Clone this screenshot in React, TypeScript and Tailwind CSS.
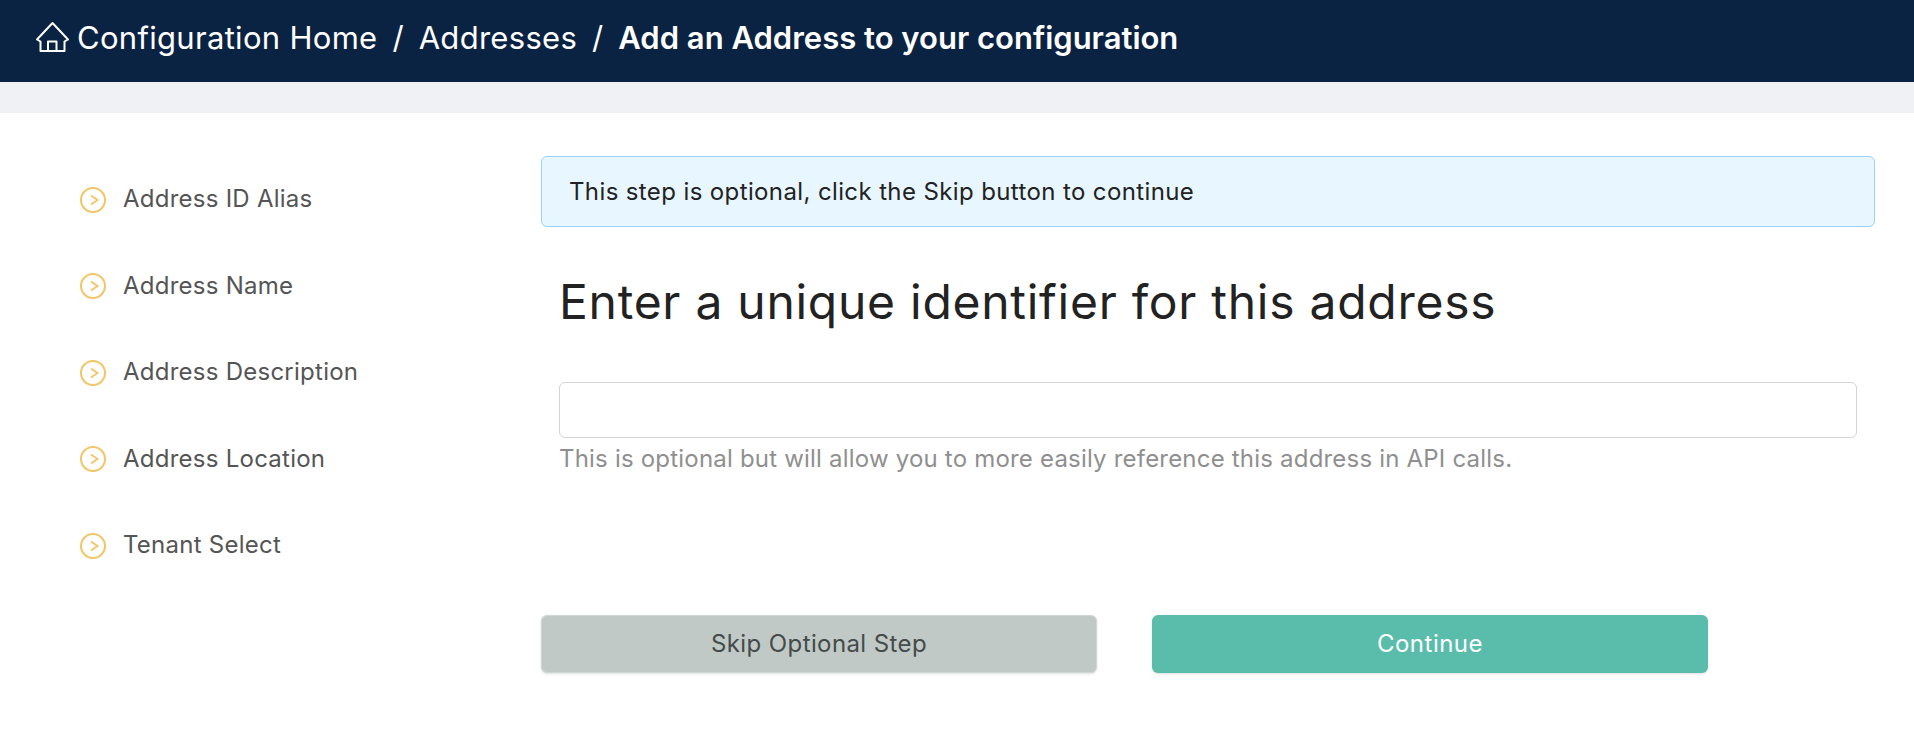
const steps = ['Address ID Alias', 'Address Name', 'Address Description', 'Address Location', 'Tenant Select'];

const HomeIcon = () => (
  <svg className="w-[33px] h-[30px] mr-[8px] -mt-[3px] shrink-0" viewBox="0 0 33 30" fill="none" stroke="currentColor" strokeWidth="2" strokeLinejoin="round">
    <path d="M4.5 19.5L1 17.5 16.5 1 32 17.5l-3.5 2V29h-24z" />
    <path d="M12 29V19.5h8.5V29" />
  </svg>
);

const StepIcon = () => (
  <svg className="w-[26px] h-[26px] mt-[1px] shrink-0" viewBox="0 0 26 26" fill="none" stroke="#f2c566">
    <circle cx="13" cy="13" r="12" strokeWidth="2" />
    <path d="M11 8.5l6.5 4.5-6.5 4.5" strokeWidth="1.8" />
  </svg>
);

const App = () => {
  return (
    <div className="min-h-[748px] bg-white font-['Inter',sans-serif]">
      <header className="h-[82px] bg-[#0b2343] flex items-center pl-[36px] pb-[5px] text-white text-[31px]">
        <HomeIcon />
        <span className="tracking-[0.3px]">Configuration Home</span>
        <span className="mx-[15px]">/</span>
        <span className="tracking-[0.3px]">Addresses</span>
        <span className="mx-[15px]">/</span>
        <span className="font-semibold">Add an Address to your configuration</span>
      </header>
      <div className="h-[31px] bg-[#f0f1f5]" />
      <main className="flex pt-[43px]">
        <nav className="w-[541px] shrink-0 pl-[80px] flex flex-col gap-[50.5px] pt-[25px]">
          {steps.map((step) => (
            <div key={step} className="flex items-center gap-[17px] h-[36px] text-[24px] tracking-[0.25px] text-[#555555]">
              <StepIcon />
              <span>{step}</span>
            </div>
          ))}
        </nav>
        <section className="w-[1334px]">
          <div className="h-[71px] bg-[#e8f7ff] border border-[#99d1ff] rounded-[6px] flex items-center pl-[27px] text-[24px] tracking-[0.38px] text-[#222222]">
            This step is optional, click the Skip button to continue
          </div>
          <div className="px-[18px]">
            <h1 className="mt-[43px] text-[48px] leading-[64px] tracking-[0.73px] text-[#222222]">Enter a unique identifier for this address</h1>
            <input className="mt-[48px] block w-full h-[56px] border border-[#d5d5d5] rounded-[6px] bg-white" />
            <p className="mt-[5px] text-[24px] leading-[32px] tracking-[0.2px] text-[#8f8f8f]">
              This is optional but will allow you to more easily reference this address in API calls.
            </p>
          </div>
          <div className="mt-[140px] flex gap-[55px]">
            <button className="w-[556px] h-[58px] rounded-[6px] bg-[#c0c9c6] border border-[#d0d6d4] shadow-sm text-[24px] tracking-[0.4px] text-[#444b4a]">
              Skip Optional Step
            </button>
            <button className="w-[556px] h-[58px] rounded-[6px] bg-[#5abdab] shadow-sm text-[24px] tracking-[0.5px] text-white">
              Continue
            </button>
          </div>
        </section>
      </main>
    </div>
  );
};

export default App;
